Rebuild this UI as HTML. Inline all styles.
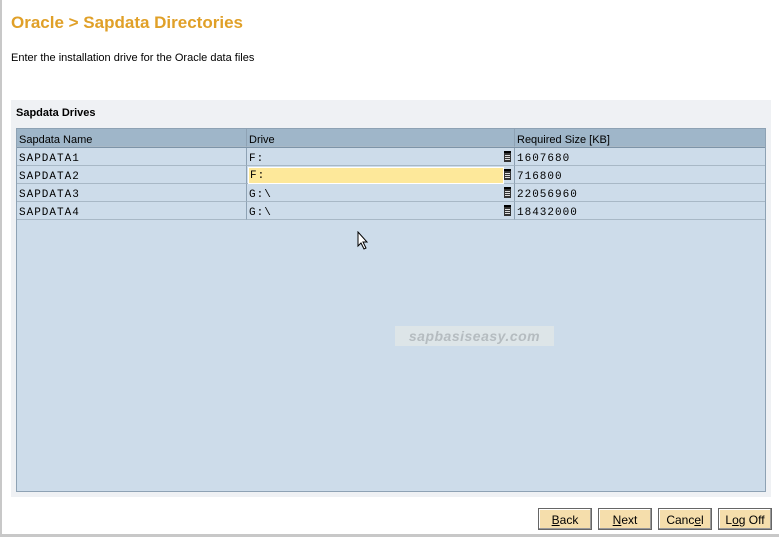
<!DOCTYPE html>
<html><head><style>
body{margin:0;width:779px;height:537px;background:#fff;position:relative;overflow:hidden;font-family:"Liberation Sans",sans-serif;}
.a{position:absolute}
.h{left:11px;top:13px;font-size:17px;font-weight:bold;color:#e0a028}
.d{left:11px;top:52px;font-size:11px;color:#000}
.panel{left:11px;top:100px;width:760px;height:397px;background:#eff1f4}
.pt{left:16px;top:107px;font-size:11px;font-weight:bold}
.tbl{left:16px;top:128px;width:748px;height:362px;background:#cddcea;border:1px solid #8ea2b4}
.hdr{left:0;top:0;width:748px;height:18px;background:#9fb6c9;border-bottom:1px solid #7d94a8}
.cell{position:absolute;font-size:11px;line-height:18px;padding-left:2px;padding-top:2px;box-sizing:border-box;height:18px;border-right:1px solid #8ea2b4;border-bottom:1px solid #a8b8c6}
.m{font-family:"Liberation Mono",monospace;font-size:11px;letter-spacing:1px}
.ic{position:absolute;right:3px;top:3px;width:7px;height:9px;background:#333;border-top:2px solid #000}
.ic:after{content:"";position:absolute;left:1px;top:2px;width:5px;height:5px;background:repeating-linear-gradient(#ddd 0 1px,#333 1px 2px)}
.btn{position:absolute;top:508px;width:52px;height:20px;background:#f5deac;border:1px solid #666;box-shadow:inset -1px -1px #999,inset 1px 1px #fff;font-size:12px;text-align:center;line-height:22px}
</style></head><body>
<div class="a" style="left:0;top:0;width:2px;height:537px;background:#c8c8c8"></div>
<div class="a" style="left:0;top:534px;width:779px;height:3px;background:#c8c8c8"></div>
<div class="a h">Oracle &gt; Sapdata Directories</div>
<div class="a d">Enter the installation drive for the Oracle data files</div>
<div class="a panel"></div>
<div class="a pt">Sapdata Drives</div>
<div class="a tbl">
<div class="a hdr"></div>
<div class="cell" style="left:0;top:0;width:230px">Sapdata Name</div>
<div class="cell" style="left:230px;top:0;width:268px">Drive</div>
<div class="cell" style="left:498px;top:0;width:250px;border-right:0">Required Size [KB]</div>

<div class="cell m" style="left:0;top:19px;width:230px">SAPDATA1</div>
<div class="cell m" style="left:230px;top:19px;width:268px">F:<span class="ic"></span></div>
<div class="cell m" style="left:498px;top:19px;width:250px;border-right:0">1607680</div>

<div class="cell m" style="left:0;top:37px;width:230px">SAPDATA2</div>
<div class="cell m" style="left:230px;top:37px;width:268px"><span style="position:absolute;left:1px;top:1px;width:253px;height:15px;background:#fde89a;border:1px solid #fff;line-height:17px;padding-left:1px">F:</span><span class="ic"></span></div>
<div class="cell m" style="left:498px;top:37px;width:250px;border-right:0">716800</div>

<div class="cell m" style="left:0;top:55px;width:230px">SAPDATA3</div>
<div class="cell m" style="left:230px;top:55px;width:268px">G:\<span class="ic"></span></div>
<div class="cell m" style="left:498px;top:55px;width:250px;border-right:0">22056960</div>

<div class="cell m" style="left:0;top:73px;width:230px">SAPDATA4</div>
<div class="cell m" style="left:230px;top:73px;width:268px">G:\<span class="ic"></span></div>
<div class="cell m" style="left:498px;top:73px;width:250px;border-right:0">18432000</div>
</div>
<svg class="a" style="left:357px;top:231px" width="12" height="20"><path d="M1 1 L1 15 L4 12 L7 18 L9 17 L6 11 L10 11 Z" fill="#fff" stroke="#000"/></svg>
<div class="a" style="left:395px;top:326px;width:159px;height:20px;background:#dde5e8;color:#b5bcc0;font:italic bold 14px 'Liberation Sans',sans-serif;letter-spacing:0.5px;text-align:center;line-height:20px">sapbasiseasy.com</div>
<div class="btn" style="left:538px"><u>B</u>ack</div>
<div class="btn" style="left:598px"><u>N</u>ext</div>
<div class="btn" style="left:658px">Canc<u>e</u>l</div>
<div class="btn" style="left:718px">L<u>o</u>g Off</div>
</body></html>
